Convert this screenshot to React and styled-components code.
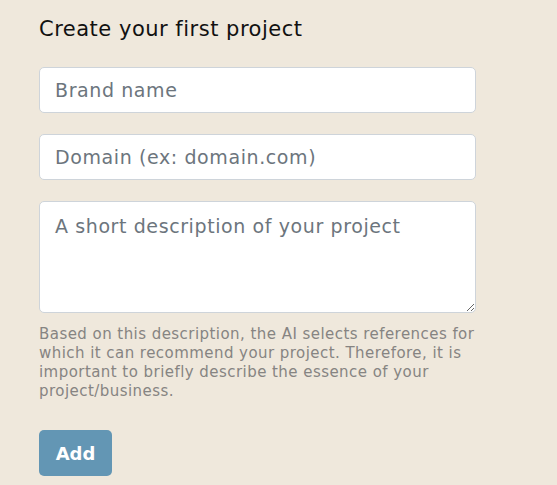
import React from "react";
import styled, { createGlobalStyle } from "styled-components";

const Global = createGlobalStyle`
  html, body { margin: 0; padding: 0; background: #efe8dc; }
  body { font-family: "DejaVu Sans", "Liberation Sans", sans-serif; }
  * { box-sizing: border-box; }
`;

const Page = styled.div`
  min-height: 485px;
  background: #efe8dc;
  padding: 14px 0 0 39px;
`;

const Form = styled.form`
  width: 437px;
  display: flex;
  flex-direction: column;
`;

const Title = styled.h2`
  margin: 0 0 23px 0;
  font-size: 21px;
  line-height: 30px;
  letter-spacing: 0.5px;
  font-weight: 400;
  color: #111;
`;

const Field = styled.input`
  width: 100%;
  height: 46px;
  border: 1px solid #ced4da;
  border-radius: 5px;
  background: #fff;
  padding: 0 15px;
  font-family: inherit;
  font-size: 19px;
  letter-spacing: 0.6px;
  color: #495057;
  margin-bottom: 21px;
  outline: none;
  &::placeholder { color: #6c757d; }
`;

const Area = styled.textarea`
  width: 100%;
  height: 112px;
  border: 1px solid #ced4da;
  border-radius: 5px;
  background: #fff;
  padding: 12px 15px;
  font-family: inherit;
  font-size: 19px;
  letter-spacing: 0.6px;
  line-height: 24px;
  color: #495057;
  display: block;
  outline: none;
  resize: vertical;
  &::placeholder { color: #6c757d; }
`;

const Help = styled.p`
  margin: 12px 0 0 0;
  font-size: 15px;
  letter-spacing: 0.45px;
  line-height: 19px;
  color: #868482;
`;

const Button = styled.button`
  margin-top: 29px;
  align-self: flex-start;
  width: 73px;
  height: 46px;
  border: none;
  border-radius: 5px;
  background: #6396b4;
  color: #fff;
  font-family: inherit;
  font-size: 18px;
  font-weight: 600;
  cursor: pointer;
`;

export default function App() {
  return (
    <Page>
      <Global />
      <Form onSubmit={(e) => e.preventDefault()}>
        <Title>Create your first project</Title>
        <Field placeholder="Brand name" />
        <Field placeholder="Domain (ex: domain.com)" />
        <Area placeholder="A short description of your project" />
        <Help>
          Based on this description, the AI selects references for which it can
          recommend your project. Therefore, it is important to briefly describe
          the essence of your project/business.
        </Help>
        <Button type="submit">Add</Button>
      </Form>
    </Page>
  );
}
